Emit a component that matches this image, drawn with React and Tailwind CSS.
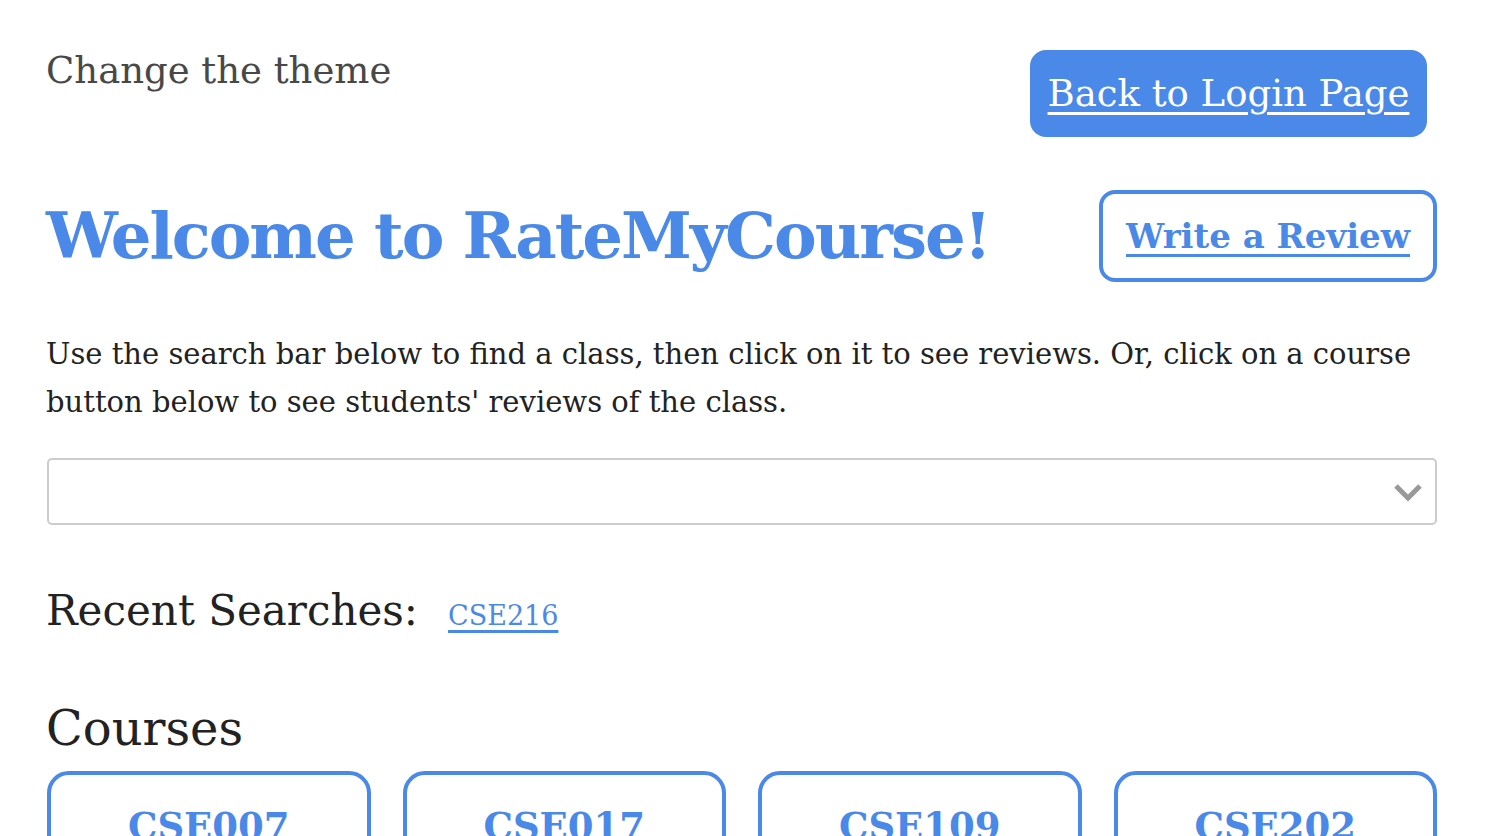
import React from "react";

const F = "font-['Roboto_Slab','DejaVu_Serif',serif]";

export default function App() {
  const courses = ["CSE007", "CSE017", "CSE109", "CSE202"];
  return (
    <div className={`${F} bg-white w-[1492px] h-[836px] overflow-hidden pl-[46px] pr-[55px] pt-[50px]`}>
      <div className="flex justify-between items-start">
        <div className="text-[37px] leading-[42px] text-[#484848]">Change the theme</div>
        <a href="#" className="mr-[10px] h-[87px] w-[397px] rounded-[16px] bg-[#4a89e8] flex items-center justify-center text-white text-[37px] underline decoration-[3px] underline-offset-[6px]">
          Back to Login Page
        </a>
      </div>
      <div className="flex justify-between items-center mt-[53px]">
        <h1 className="text-[#4a89e8] font-bold text-[64px] leading-[92px] tracking-[-2px] whitespace-nowrap">Welcome to RateMyCourse!</h1>
        <a href="#" className="h-[92px] w-[338px] rounded-[16px] border-[4px] border-[#4a89e8] flex items-center justify-center text-[#4a89e8] font-bold text-[34px] underline decoration-[3px] underline-offset-[6px]">
          Write a Review
        </a>
      </div>
      <p className="mt-[48px] text-[29px] leading-[48px] text-[#222]">
        Use the search bar below to find a class, then click on it to see reviews. Or, click on a course button below to see students' reviews of the class.
      </p>
      <div className="mt-[32px] ml-[1px] h-[67px] border-[2px] border-[#cccccc] rounded-[5px] flex items-center justify-end pr-[12px]">
        <svg width="30" height="22" viewBox="0 0 30 22">
          <path d="M3 5 L15 17 L27 5" fill="none" stroke="#999" strokeWidth="5" />
        </svg>
      </div>
      <div className="mt-[56px] flex items-baseline">
        <span className="text-[42px] leading-[60px] text-[#222]">Recent Searches:</span>
        <a href="#" className="ml-[30px] text-[27px] text-[#4a89e8] underline decoration-[3px] underline-offset-[5px]">CSE216</a>
      </div>
      <h2 className="mt-[57px] text-[48px] leading-[60px] text-[#222]">Courses</h2>
      <div className="mt-[13px] ml-[1px] grid grid-cols-4 gap-[32px]">
        {courses.map((c) => (
          <div key={c} className="h-[140px] border-[4px] border-[#4a89e8] rounded-[22px] flex justify-center pt-[27px]">
            <span className="text-[#4a89e8] font-bold text-[37px] leading-[48px]">{c}</span>
          </div>
        ))}
      </div>
    </div>
  );
}
